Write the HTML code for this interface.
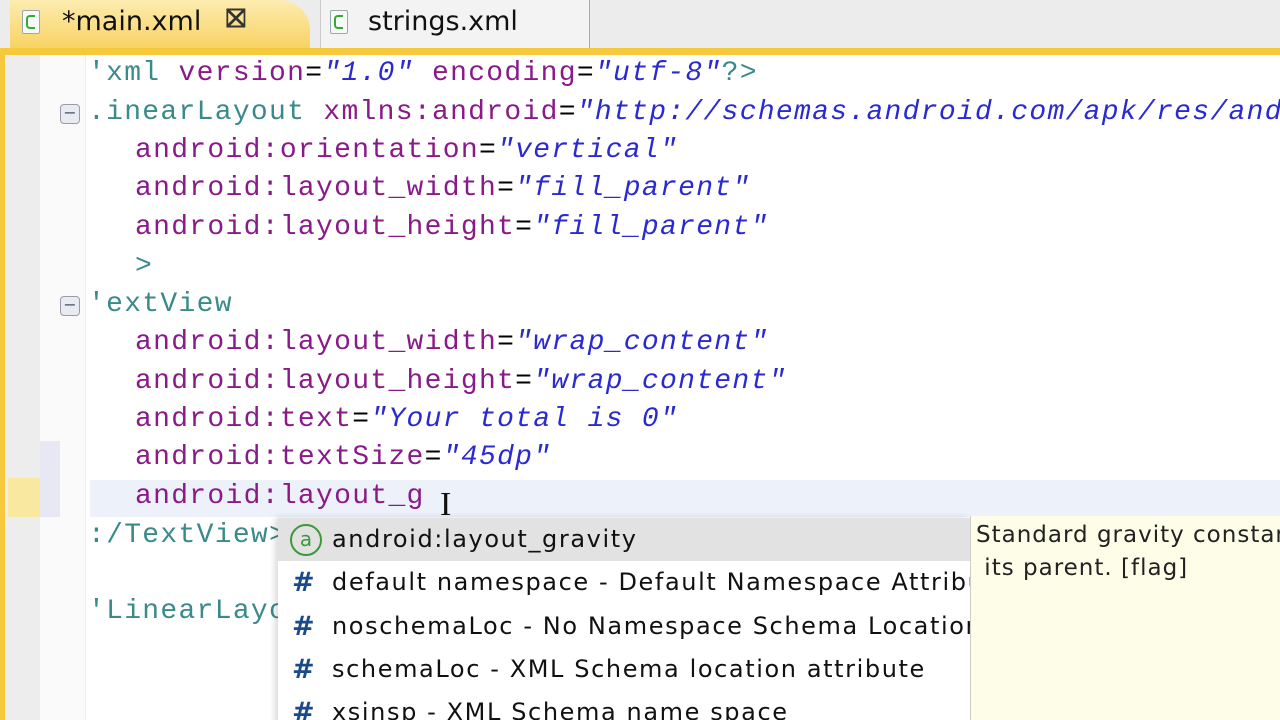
<!DOCTYPE html>
<html><head><meta charset="utf-8"><style>
html,body{margin:0;width:1280px;height:720px;overflow:hidden}
body{background:#fff;position:relative;font-family:"DejaVu Sans","Liberation Sans",sans-serif}
.a{position:absolute}
.tabbar{left:0;top:0;width:1280px;height:50px;background:#ececec}
.band{left:0;top:48px;width:1280px;height:7px;background:#f6c93c}
.lb{left:0;top:48px;width:5px;height:672px;background:#f6c93c}
.gut{left:5px;top:55px;width:35px;height:665px;background:#ededed}
.gut2{left:40px;top:55px;width:45px;height:665px;background:#fafafa;border-right:1px solid #ececec}
.cur{left:90px;top:480px;width:1190px;height:37px;background:#edf1fa}
.clip{left:0;top:55px;width:1280px;height:665px;overflow:hidden}
.l{position:absolute;font-family:"Liberation Mono",monospace;font-size:28px;letter-spacing:1.3px;white-space:pre;line-height:38px}
.t{color:#3a8a8a}.at{color:#8a1a8a}.v{color:#2a2ad0;font-style:italic}
.pop{left:278px;top:518px;width:692px;height:210px;background:#fff;box-shadow:-3px 0 6px rgba(0,0,0,.15);overflow:hidden}
.row{position:absolute;left:0;width:692px;height:43px;font-size:24px;letter-spacing:1.6px;color:#111;line-height:43px;white-space:nowrap}
.row .ic{position:absolute;left:14px;color:#1a4a8a;font-weight:bold;font-size:27px}
.row .tx{position:absolute;left:54px}
.tip{left:970px;top:516px;width:310px;height:204px;background:#fdfde8;border-left:1px solid #ccc;font-size:23px;letter-spacing:1px;color:#222;line-height:33px;padding:3px 0 0 5px;white-space:nowrap;overflow:hidden;box-sizing:border-box}
</style></head><body>
<div class="a tabbar"></div>
<div class="a" style="left:10px;top:0;width:300px;height:50px;background:linear-gradient(#fdecb0,#f8d260);border-radius:0 30px 0 0"></div>
<div class="a" style="left:320px;top:0;width:268px;height:48px;background:#f3f3f3;border-right:1px solid #aaa;border-left:1px solid #ccc"></div>
<div class="a" style="left:22px;top:10px;width:16px;height:22px;border:1px solid #9aa;background:#f8f8f8;border-radius:2px"></div>
<div class="a" style="left:26px;top:15px;width:7px;height:10px;border:2px solid #3a3;border-right:none;border-radius:4px 0 0 4px"></div>
<div class="a" style="left:62px;top:6px;font-size:27px;color:#111">*main.xml</div>
<div class="a" style="left:226px;top:4px;font-size:26px;color:#333;font-weight:bold">⛝</div>
<div class="a" style="left:330px;top:10px;width:16px;height:22px;border:1px solid #9aa;background:#f8f8f8;border-radius:2px"></div>
<div class="a" style="left:334px;top:15px;width:7px;height:10px;border:2px solid #3a3;border-right:none;border-radius:4px 0 0 4px"></div>
<div class="a" style="left:368px;top:6px;font-size:27px;color:#111">strings.xml</div>
<div class="a band"></div><div class="a lb"></div>
<div class="a gut"></div><div class="a gut2"></div>
<div class="a" style="left:8px;top:478px;width:32px;height:39px;background:#f8e8a0"></div>
<div class="a" style="left:40px;top:441px;width:20px;height:76px;background:#e8e8f4"></div>
<div class="a cur"></div>
<div class="a" style="left:60px;top:104px;width:18px;height:18px;border:1px solid #99a;border-radius:4px;background:#e8ecf2;font-size:16px;line-height:16px;text-align:center;color:#556">−</div>
<div class="a" style="left:60px;top:296px;width:18px;height:18px;border:1px solid #99a;border-radius:4px;background:#e8ecf2;font-size:16px;line-height:16px;text-align:center;color:#556">−</div>
<div class="a clip">
<div class="l" style="left:88px;top:0px"><span class="t">'xml </span><span class="at">version</span>=<span class="v">"1.0"</span> <span class="at">encoding</span>=<span class="v">"utf-8"</span><span class="t">?&gt;</span></div>
<div class="l" style="left:88px;top:39px"><span class="t">.inearLayout </span><span class="at">xmlns:android</span>=<span class="v">"http://schemas.android.com/apk/res/android"</span></div>
<div class="l" style="left:135px;top:77px"><span class="at">android:orientation</span>=<span class="v">"vertical"</span></div>
<div class="l" style="left:135px;top:115px"><span class="at">android:layout_width</span>=<span class="v">"fill_parent"</span></div>
<div class="l" style="left:135px;top:154px"><span class="at">android:layout_height</span>=<span class="v">"fill_parent"</span></div>
<div class="l" style="left:135px;top:193px"><span class="t">&gt;</span></div>
<div class="l" style="left:88px;top:231px"><span class="t">'extView</span></div>
<div class="l" style="left:135px;top:269px"><span class="at">android:layout_width</span>=<span class="v">"wrap_content"</span></div>
<div class="l" style="left:135px;top:308px"><span class="at">android:layout_height</span>=<span class="v">"wrap_content"</span></div>
<div class="l" style="left:135px;top:346px"><span class="at">android:text</span>=<span class="v">"Your total is 0"</span></div>
<div class="l" style="left:135px;top:384px"><span class="at">android:textSize</span>=<span class="v">"45dp"</span></div>
<div class="l" style="left:135px;top:423px"><span class="at">android:layout_g</span></div>
<div class="l" style="left:88px;top:462px"><span class="t">:/TextView&gt;</span></div>
<div class="l" style="left:88px;top:538px"><span class="t">'LinearLayout&gt;</span></div>
</div>
<div class="a" style="left:440px;top:486px;font-size:34px;color:#111;font-family:'Liberation Serif',serif">I</div>
<div class="a pop">
<div class="row" style="top:0;background:#e2e2e2"><span class="ic" style="color:#3a9a3a;font-weight:normal;left:12px;top:0;width:28px;height:28px;border:2px solid #3a9a3a;border-radius:50%;line-height:26px;text-align:center;font-size:20px;margin-top:6px;letter-spacing:0">a</span><span class="tx">android:layout_gravity</span></div>
<div class="row" style="top:43px"><span class="ic">#</span><span class="tx">default namespace - Default Namespace Attribute</span></div>
<div class="row" style="top:87px"><span class="ic">#</span><span class="tx">noschemaLoc - No Namespace Schema Location</span></div>
<div class="row" style="top:130px"><span class="ic">#</span><span class="tx">schemaLoc - XML Schema location attribute</span></div>
<div class="row" style="top:173px"><span class="ic">#</span><span class="tx">xsinsp - XML Schema name space</span></div>
</div>
<div class="a tip">Standard gravity constant for<br>&nbsp;its parent. [flag]</div>
</body></html>
